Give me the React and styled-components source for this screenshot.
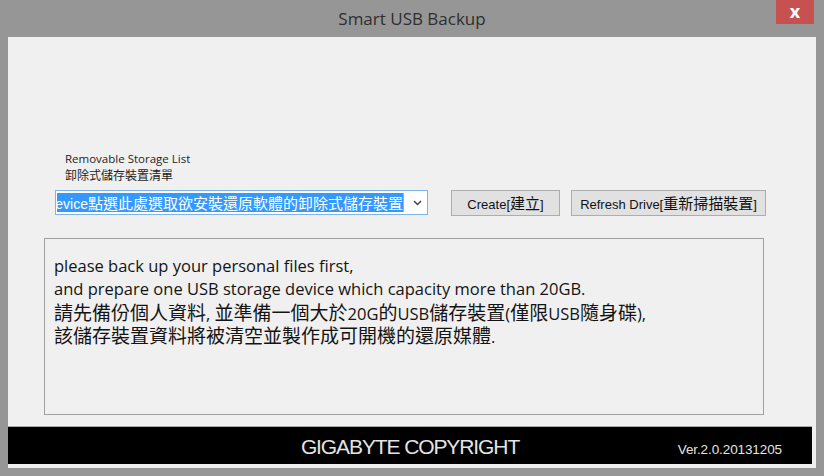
import React from "react";
import styled, { createGlobalStyle } from "styled-components";

const GlobalStyle = createGlobalStyle`
  html, body {
    margin: 0;
    padding: 0;
    background: #969696;
  }
`;

const Window = styled.div`
  width: 824px;
  height: 476px;
  background: #969696;
  display: flex;
  flex-direction: column;
  box-sizing: border-box;
`;

const TitleBar = styled.div`
  height: 37px;
  flex: 0 0 37px;
  display: grid;
  grid-template-columns: 1fr auto 1fr;
  align-items: start;
`;

const Title = styled.div`
  grid-column: 2;
  padding-top: 7px;
  font-family: "Open Sans", "Liberation Sans", sans-serif;
  font-size: 17px;
  line-height: 24px;
  color: #2e2e2e;
`;

const CloseButton = styled.div`
  justify-self: end;
  width: 38px;
  height: 24px;
  margin-right: 10px;
  background: #c75050;
  color: #ffffff;
  display: flex;
  align-items: center;
  justify-content: center;
  font-family: "Open Sans", "Liberation Sans", sans-serif;
  font-size: 18px;
  font-weight: 700;
  line-height: 1;
  padding-bottom: 3px;
  box-sizing: border-box;
`;

const Client = styled.div`
  flex: 1;
  margin: 0 8px 9px 8px;
  background: #f0f0f0;
  display: flex;
  flex-direction: column;
  padding: 114px 0 4px 0;
  box-sizing: border-box;
`;

const Cjk = styled.span`
  font-family: "Noto Sans CJK TC", "Noto Sans CJK SC", sans-serif;
  font-size: ${(p) => p.$size || 15}px;
`;

const LabelGroup = styled.div`
  padding-left: 57px;
  font-family: "Open Sans", "Liberation Sans", "Noto Sans CJK TC", sans-serif;
  font-size: 11.5px;
  line-height: 16px;
  color: #1e1e1e;
`;

const ControlRow = styled.div`
  margin-top: 5px;
  padding-left: 47px;
  height: 27px;
  display: flex;
  align-items: center;
`;

const ComboBox = styled.div`
  width: 373px;
  height: 25px;
  box-sizing: border-box;
  border: 1px solid #7eb4ea;
  background: #ffffff;
  display: flex;
  align-items: center;
  padding-left: 1px;
`;

const ValueWindow = styled.div`
  flex: 0 0 347px;
  height: 19px;
  overflow: hidden;
  display: flex;
  justify-content: flex-end;
`;

const Highlight = styled.span`
  background: #3399ff;
  color: #ffffff;
  white-space: nowrap;
  font-family: "Liberation Sans", Arial, sans-serif;
  font-size: 14px;
  line-height: 19px;
  border-right: 1px solid #e8a060;
`;

const Chevron = styled.div`
  flex: 1;
  display: flex;
  align-items: center;
  justify-content: center;
  padding-left: 4px;
`;

const ButtonGroup = styled.div`
  margin-left: 23px;
  display: flex;
  align-items: center;
  gap: 11px;
`;

const Button = styled.button`
  width: ${(p) => p.$width}px;
  height: 26px;
  box-sizing: border-box;
  border: 1px solid #adadad;
  background: #e1e1e1;
  color: #111111;
  font-family: "Liberation Sans", Arial, sans-serif;
  font-size: 13px;
  padding: 0;
  white-space: nowrap;
  cursor: pointer;
`;

const TextPanel = styled.div`
  margin: 22px 0 0 36px;
  width: 720px;
  height: 177px;
  box-sizing: border-box;
  border: 1px solid #a0a0a0;
  padding: 15px 0 0 9px;
  font-family: "Open Sans", "Noto Sans CJK TC", sans-serif;
  font-size: 16.5px;
  line-height: 23px;
  color: #141414;
`;

const Line = styled.div`
  white-space: nowrap;
  height: 23px;
  line-height: 23px;
`;

const Footer = styled.div`
  margin: 11px 4px 0 0;
  height: 38px;
  box-sizing: border-box;
  border-top: 1px solid #a8a8a8;
  background: #000000;
  display: grid;
  grid-template-columns: 1fr auto 1fr;
  align-items: center;
`;

const Brand = styled.div`
  grid-column: 2;
  font-family: "Liberation Sans Narrow", "Arial Narrow", "Liberation Sans", sans-serif;
  font-size: 21px;
  letter-spacing: -1.1px;
  color: #e4e4e4;
  padding-top: 2px;
`;

const Version = styled.div`
  justify-self: end;
  padding: 8px 30px 0 0;
  font-family: "Liberation Sans Narrow", "Arial Narrow", "Liberation Sans", sans-serif;
  font-size: 13.5px;
  letter-spacing: -0.1px;
  color: #e4e4e4;
`;

const App = () => {
  return (
    <Window>
      <GlobalStyle />
      <TitleBar>
        <Title>Smart USB Backup</Title>
        <CloseButton>x</CloseButton>
      </TitleBar>
      <Client>
        <LabelGroup>
          <div>Removable Storage List</div>
          <div>
            <Cjk $size={12}>卸除式儲存裝置清單</Cjk>
          </div>
        </LabelGroup>
        <ControlRow>
          <ComboBox>
            <ValueWindow>
              <Highlight>
                Device<Cjk $size={15}>點選此處選取欲安裝還原軟體的卸除式儲存裝置</Cjk>
              </Highlight>
            </ValueWindow>
            <Chevron>
              <svg width="9" height="6" viewBox="0 0 9 6">
                <polyline points="1,1 4.5,4.5 8,1" fill="none" stroke="#444" strokeWidth="1.5" />
              </svg>
            </Chevron>
          </ComboBox>
          <ButtonGroup>
            <Button $width={109}>
              Create[<Cjk $size={15}>建立</Cjk>]
            </Button>
            <Button $width={195}>
              Refresh Drive[<Cjk $size={15}>重新掃描裝置</Cjk>]
            </Button>
          </ButtonGroup>
        </ControlRow>
        <TextPanel>
          <Line>please back up your personal files first,</Line>
          <Line>and prepare one USB storage device which capacity more than 20GB.</Line>
          <Line>
            <Cjk $size={19}>請先備份個人資料</Cjk>, <Cjk $size={19}>並準備一個大於</Cjk>20G
            <Cjk $size={19}>的</Cjk>USB<Cjk $size={19}>儲存裝置</Cjk>(<Cjk $size={19}>僅限</Cjk>USB
            <Cjk $size={19}>隨身碟</Cjk>),
          </Line>
          <Line>
            <Cjk $size={19}>該儲存裝置資料將被清空並製作成可開機的還原媒體</Cjk>.
          </Line>
        </TextPanel>
        <Footer>
          <Brand>GIGABYTE COPYRIGHT</Brand>
          <Version>Ver.2.0.20131205</Version>
        </Footer>
      </Client>
    </Window>
  );
};

export default App;
